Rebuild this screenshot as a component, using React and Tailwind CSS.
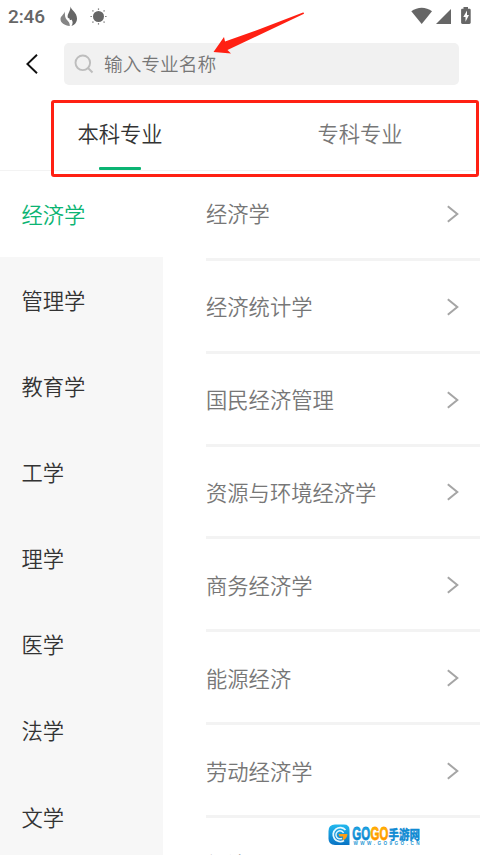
import { useState } from "react";

const tabs = ["本科专业", "专科专业"];

const categories = ["经济学", "管理学", "教育学", "工学", "理学", "医学", "法学", "文学"];

const majors = [
  "经济学",
  "经济统计学",
  "国民经济管理",
  "资源与环境经济学",
  "商务经济学",
  "能源经济",
  "劳动经济学",
  "经济工程",
];

function FlameIcon() {
  return (
    <svg width="18" height="21" viewBox="0 0 18 21" className="shrink-0">
      <path
        d="M10.5 0.5C11 4 17 6.5 17 12.5C17 16.5 14.5 19 11.5 20C13 17.5 13 15.5 11.5 13.5C10.5 14.5 9.5 14 9.3 12.5C9.3 12 9 11.3 8.3 12.5C6 9 10.5 6 10.5 0.5Z"
        fill="#666"
      />
      <path
        d="M4.5 5.5C5.3 8.5 4.6 10.5 6 12.8C7.5 15 10 16 9.8 20C4.5 19.5 0.5 17 0.5 13C0.5 10 4 9 4.5 5.5Z"
        fill="#858585"
      />
    </svg>
  );
}

function SunIcon() {
  return (
    <svg width="17" height="17" viewBox="0 0 17 17" className="shrink-0">
      <circle cx="8.5" cy="8.5" r="5.5" fill="#666" />
      <path
        d="M8.5 0.5v1.3M8.5 15.2v1.3M0.5 8.5h1.3M15.2 8.5h1.3M2.5 2.5l.9.9M13.6 13.6l.9.9M2.5 14.5l.9-.9M13.6 3.4l.9-.9"
        stroke="#666"
        strokeWidth="1.2"
      />
    </svg>
  );
}

function StatusBar() {
  return (
    <div className="flex h-8 items-center pl-2 pr-2">
      <span className="w-[51.5px] pt-[2px] font-[Roboto] text-[19px] font-medium leading-8 tracking-[-0.1px] text-[#666]">
        2:46
      </span>
      <FlameIcon />
      <span className="ml-[12px]">
        <SunIcon />
      </span>
      <svg width="62" height="20" viewBox="410 6 62 20" className="ml-auto" fill="#666">
        <path d="M411.3 11.2C417.5 6.5 426 6.5 432 11.2L421.7 24Z" />
        <path d="M451 9V24H436Z" />
        <path
          fillRule="evenodd"
          d="M463.5 7h4.5v1.7h1.3c.9 0 1.4.5 1.4 1.3v12.6c0 .9-.5 1.4-1.4 1.4h-6.8c-.9 0-1.4-.5-1.4-1.4V10c0-.8.5-1.3 1.4-1.3h1zM467 10.5l-3.7 6.5h2.2v4.7l3.5-6.7h-2z"
        />
      </svg>
    </div>
  );
}

function SearchHeader() {
  return (
    <div className="flex h-[68px] items-start pt-[11px]">
      <button type="button" aria-label="返回" className="flex h-[42px] w-16 items-center pl-[26px]">
        <svg width="12" height="20" viewBox="0 0 12 20" fill="none" stroke="#111" strokeWidth="1.9">
          <path d="M11 0.8L1.4 10L11 19.2" />
        </svg>
      </button>
      <div className="flex h-[42px] w-[395px] items-center rounded-[5px] bg-[#f1f1f1] pl-[10px]">
        <svg width="20" height="20" viewBox="0 0 20 20" fill="none" stroke="#bdbdbd" strokeWidth="1.9">
          <circle cx="8.8" cy="8.8" r="7.3" />
          <path d="M14 14L18.5 18.5" />
        </svg>
        <span className="ml-[10px] pb-[1px] text-[18.7px] text-[#777]">输入专业名称</span>
      </div>
    </div>
  );
}

function Tabs({ active, onChange }) {
  return (
    <div className="relative flex h-[71px] border-b border-[#f3f3f3]">
      {tabs.map((tab, i) => (
        <button
          key={tab}
          type="button"
          onClick={() => onChange(i)}
          className={`flex w-1/2 flex-col items-center pt-[17px] text-[21.3px] leading-8 ${
            i === active ? "text-[#333]" : "text-[#777]"
          }`}
        >
          {tab}
          {i === active && <span className="mt-[18px] h-[3px] w-[42px] rounded-[1px] bg-[#0bb473]" />}
        </button>
      ))}
      {/* marker frame around both tabs */}
      <div className="pointer-events-none absolute left-[51px] top-0 h-[77px] w-[428px] rounded-[3px] border-[3px] border-[#ff2013]" />
    </div>
  );
}

function Watermark() {
  return (
    <svg
      width="94"
      height="26"
      viewBox="0 0 94 26"
      className="absolute left-[328px] top-[822px]"
    >
      <defs>
        <linearGradient id="blue" x1="0" y1="0" x2="0" y2="1">
          <stop offset="0" stopColor="#22b8ee" />
          <stop offset="1" stopColor="#0873c4" />
        </linearGradient>
        <linearGradient id="orange" x1="0" y1="0" x2="0" y2="1">
          <stop offset="0" stopColor="#ffc400" />
          <stop offset="1" stopColor="#ff8500" />
        </linearGradient>
      </defs>
      <path d="M7 2.5H16Q21.5 2.5 21.5 8V23H7Q0.5 23 0.5 16.5V9Q0.5 2.5 7 2.5Z" fill="url(#blue)" />
      <path d="M17.5 8A7 7 0 1 0 16 18.5" fill="none" stroke="#e6f8ff" strokeWidth="1.8" />
      <path d="M15.5 11A4 4 0 1 0 14 16.3" fill="none" stroke="#d8f3ff" strokeWidth="1.5" />
      <path d="M10.5 12H19.5Q19 17 14.5 18.5L15 14.5H11.5Z" fill="#ff9d16" />
      <g fontFamily="'Liberation Sans', sans-serif" fontWeight="700" strokeWidth="0.8">
        <text x="24.3" y="17.8" fontSize="18.5" textLength="17.8" lengthAdjust="spacingAndGlyphs" fill="url(#blue)" stroke="#0f93d8">GO</text>
        <text x="42.5" y="17.8" fontSize="18.5" textLength="17.8" lengthAdjust="spacingAndGlyphs" fill="url(#orange)" stroke="#ffa200">GO</text>
      </g>
      <text x="60.5" y="17" fontSize="13" textLength="31.5" lengthAdjust="spacingAndGlyphs" fontFamily="'Noto Sans CJK SC', sans-serif" fontWeight="900" fill="#118bd3" stroke="#118bd3" strokeWidth="0.3">手游网</text>
      <text x="25.5" y="23.3" fontSize="4.6" textLength="66" fontFamily="'Liberation Sans', sans-serif" fontWeight="700" fill="#2796d4">WWW.GO9GO.CN</text>
    </svg>
  );
}

export default function App() {
  const [tab, setTab] = useState(0);
  const [category, setCategory] = useState(0);

  return (
    <div className="relative flex h-[855px] w-[480px] flex-col overflow-hidden bg-white font-['Noto_Sans_CJK_SC',sans-serif] font-[350]">
      <StatusBar />
      <SearchHeader />
      <Tabs active={tab} onChange={setTab} />

      <div className="flex min-h-0 flex-1">
        <nav className="w-[163px] shrink-0 bg-[#f7f7f7]">
          {categories.map((name, i) => (
            <button
              key={name}
              type="button"
              onClick={() => setCategory(i)}
              className={`flex h-[86.15px] w-full items-center pb-[1px] pl-[21.5px] text-left text-[21.3px] ${
                i === category ? "bg-white text-[#0bb473]" : "text-[#333]"
              }`}
            >
              {name}
            </button>
          ))}
        </nav>
        <ul className="-mt-[3px] ml-[43px] flex-1">
          {majors.map((name) => (
            <li
              key={name}
              className="flex h-[92.85px] items-center justify-between border-b-[3px] border-[#f3f3f3] pr-[21px] pt-[1px] text-[21.3px] text-[#777] last:pt-[3px]"
            >
              {name}
              <svg width="12" height="18" viewBox="0 0 12 18" fill="none" stroke="#a5a5a5" strokeWidth="2" className="mt-px">
                <path d="M0.8 1.2L10.3 9L0.8 16.8" />
              </svg>
            </li>
          ))}
        </ul>
      </div>

      <svg width="94" height="44" viewBox="212 11 94 44" className="absolute left-[212px] top-[11px]">
        <path
          d="M303 12.6Q305 12.9 303.5 14L227.5 50L231 53.5L213.5 52L224 37L225 41.5L260 29Z"
          fill="#ff2013"
        />
      </svg>
      <Watermark />
    </div>
  );
}
